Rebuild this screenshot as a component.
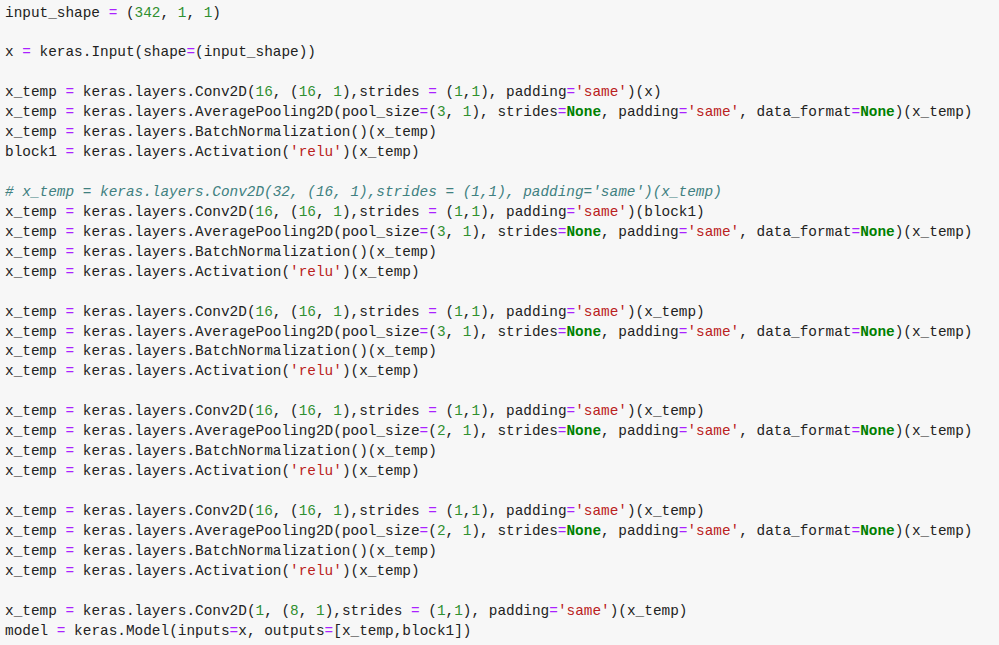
import React from 'react';

const code = `input_shape = (342, 1, 1)

x = keras.Input(shape=(input_shape))

x_temp = keras.layers.Conv2D(16, (16, 1),strides = (1,1), padding='same')(x)
x_temp = keras.layers.AveragePooling2D(pool_size=(3, 1), strides=None, padding='same', data_format=None)(x_temp)
x_temp = keras.layers.BatchNormalization()(x_temp)
block1 = keras.layers.Activation('relu')(x_temp)

# x_temp = keras.layers.Conv2D(32, (16, 1),strides = (1,1), padding='same')(x_temp)
x_temp = keras.layers.Conv2D(16, (16, 1),strides = (1,1), padding='same')(block1)
x_temp = keras.layers.AveragePooling2D(pool_size=(3, 1), strides=None, padding='same', data_format=None)(x_temp)
x_temp = keras.layers.BatchNormalization()(x_temp)
x_temp = keras.layers.Activation('relu')(x_temp)

x_temp = keras.layers.Conv2D(16, (16, 1),strides = (1,1), padding='same')(x_temp)
x_temp = keras.layers.AveragePooling2D(pool_size=(3, 1), strides=None, padding='same', data_format=None)(x_temp)
x_temp = keras.layers.BatchNormalization()(x_temp)
x_temp = keras.layers.Activation('relu')(x_temp)

x_temp = keras.layers.Conv2D(16, (16, 1),strides = (1,1), padding='same')(x_temp)
x_temp = keras.layers.AveragePooling2D(pool_size=(2, 1), strides=None, padding='same', data_format=None)(x_temp)
x_temp = keras.layers.BatchNormalization()(x_temp)
x_temp = keras.layers.Activation('relu')(x_temp)

x_temp = keras.layers.Conv2D(16, (16, 1),strides = (1,1), padding='same')(x_temp)
x_temp = keras.layers.AveragePooling2D(pool_size=(2, 1), strides=None, padding='same', data_format=None)(x_temp)
x_temp = keras.layers.BatchNormalization()(x_temp)
x_temp = keras.layers.Activation('relu')(x_temp)

x_temp = keras.layers.Conv2D(1, (8, 1),strides = (1,1), padding='same')(x_temp)
model = keras.Model(inputs=x, outputs=[x_temp,block1])`;

// split a line into coloured pieces, jupyter classic style
const renderLine = (line) => {
  if (line.trim().startsWith('#')) {
    return <span className="italic text-[#408080]">{line}</span>;
  }
  const parts = line.split(/([A-Za-z_][A-Za-z_0-9]*|'[^']*'|\d+|=)/);
  return parts.map((p, i) => {
    if (!p) return null;
    if (p === 'None') return <span key={i} className="font-bold text-[#008000]">{p}</span>;
    if (/^\d+$/.test(p)) return <span key={i} className="text-[#2f8f2f]">{p}</span>;
    if (p.startsWith("'")) return <span key={i} className="text-[#ba2121]">{p}</span>;
    if (p === '=') return <span key={i} className="text-[#aa22ff]">{p}</span>;
    return <span key={i}>{p}</span>;
  });
};

const App = () => {
  const lines = code.split('\n');

  return (
    <div className="w-[999px] h-[645px] bg-[#f7f7f7] overflow-hidden">
      <div className="pl-[5px] pt-[3.5px] font-['Liberation_Mono',monospace] text-[14.4px] leading-[19.94px] text-[#222]">
        {lines.map((line, index) => (
          <div key={index} className="whitespace-pre h-[19.94px]">
            {renderLine(line)}
          </div>
        ))}
      </div>
    </div>
  );
};

export default App;
